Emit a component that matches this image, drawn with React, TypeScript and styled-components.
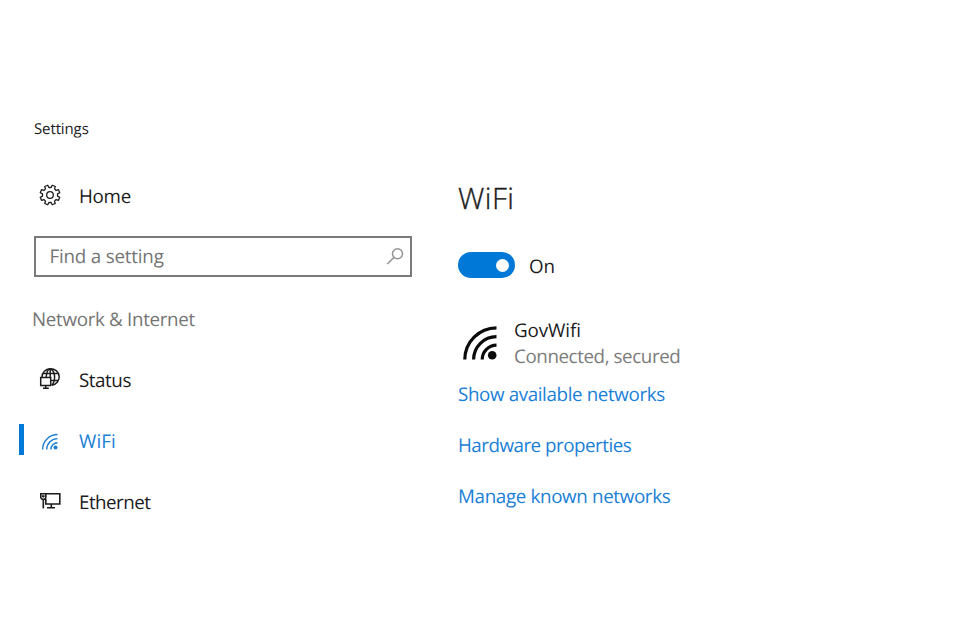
import React from 'react';
import styled, { createGlobalStyle } from 'styled-components';

const GlobalStyle = createGlobalStyle`
  *, *::before, *::after { box-sizing: border-box; }
  body {
    margin: 0;
    background: #fff;
    color: #1c1c1c;
    font-family: 'Open Sans', 'Noto Sans', sans-serif;
    font-size: 18.8px;
    line-height: 26px;
    text-rendering: geometricPrecision;
  }
`;

const Window = styled.div`
  display: grid;
  grid-template-columns: 458px 1fr;
  height: 640px;
  overflow: hidden;
  background: #fff;
`;

const Sidebar = styled.aside`
  display: flex;
  flex-direction: column;
  padding: 119px 46px 0 19px;
`;

const Label = styled.span<{ $track?: number }>`
  white-space: nowrap;
  letter-spacing: ${p => p.$track ?? 0}px;
`;

const WindowTitle = styled.div`
  padding-left: 15px;
  font-size: 15px;
  line-height: 20px;
  letter-spacing: -0.12px;
`;

const NavItem = styled.a<{ $active?: boolean }>`
  display: grid;
  grid-template-columns: 5px 49px 1fr;
  column-gap: 3px;
  align-items: center;
  height: 31px;
  color: ${p => (p.$active ? '#1a80d6' : 'inherit')};
  text-decoration: none;

  &::before {
    content: '';
    height: 31px;
    background: ${p => (p.$active ? '#0078d7' : 'transparent')};
  }

  ${Label} {
    padding-top: 2px;
  }
`;

const HomeItem = styled(NavItem)`
  margin-top: 40px;
`;

const NavIcon = styled.svg`
  display: block;
  width: 24px;
  height: 24px;
  margin-left: 10.5px;
  overflow: visible;
`;

const NavList = styled.nav`
  display: flex;
  flex-direction: column;
  gap: 30px;
  margin-top: 31px;
`;

const SearchBox = styled.div`
  display: flex;
  align-items: center;
  justify-content: space-between;
  width: 378px;
  height: 40.5px;
  margin: 26px 0 0 15px;
  padding: 0 6px 0 13.5px;
  border: 2px solid #7a7a7a;
  color: #757575;
`;

const SearchIcon = styled.svg`
  display: block;
  width: 18px;
  height: 18px;
`;

const SectionTitle = styled.div`
  margin-top: 29.5px;
  padding-left: 13px;
  color: #757575;
`;

const Content = styled.main`
  display: flex;
  flex-direction: column;
  align-items: flex-start;
  padding-top: 178px;
`;

const Heading = styled.h1`
  margin: 0;
  font-size: 29.5px;
  font-weight: 300;
  line-height: 40px;
  -webkit-text-stroke: 0.35px currentColor;
`;

const ToggleRow = styled.div`
  display: flex;
  align-items: center;
  gap: 14.5px;
  height: 26px;
  margin-top: 34px;

  ${Label} {
    padding-top: 2px;
  }
`;

const Toggle = styled.div`
  display: flex;
  align-items: center;
  justify-content: flex-end;
  width: 56.5px;
  height: 26px;
  padding-right: 6px;
  border-radius: 13px;
  background: #0078d7;
`;

const Knob = styled.div`
  width: 13px;
  height: 13px;
  border-radius: 50%;
  background: #fff;
`;

const Network = styled.div`
  display: flex;
  gap: 17px;
  margin-top: 38px;
  padding-left: 5px;
`;

const SignalIcon = styled.svg`
  display: block;
  width: 34px;
  height: 34px;
  margin-top: 10px;
  color: #0a0a0a;
`;

const NetworkText = styled.div`
  display: flex;
  flex-direction: column;
  padding-top: 1px;
`;

const NetworkState = styled(Label)`
  color: #7c7c7c;
`;

const Links = styled.div`
  display: flex;
  flex-direction: column;
  gap: 25px;
  margin-top: 12px;
`;

const Link = styled.a<{ $track: number }>`
  color: #1a80d6;
  letter-spacing: ${p => p.$track}px;
  text-decoration: none;
  white-space: nowrap;
`;

const gearPath = (() => {
  const points: string[] = [];
  for (let i = 0; i < 8; i++) {
    const mid = 22.5 + i * 45;
    const corners: [number, number][] = [[-14, 7.6], [-9.5, 10], [9.5, 10], [14, 7.6]];
    corners.forEach(([offset, r]) => {
      const a = ((mid + offset) * Math.PI) / 180;
      points.push(`${(12 + r * Math.cos(a)).toFixed(2)} ${(12 + r * Math.sin(a)).toFixed(2)}`);
    });
  }
  return `M${points.join('L')}Z`;
})();

const GearIcon = () => (
  <NavIcon viewBox="0 0 24 24" fill="none" stroke="currentColor" strokeWidth="1.3" strokeLinejoin="round">
    <path d={gearPath} />
    <circle cx="12" cy="12" r="3.3" />
  </NavIcon>
);

const GlobeIcon = () => (
  <NavIcon viewBox="0 0 24 24" fill="none" stroke="currentColor" strokeWidth="1.5">
    <path d="M4 10A8.6 8.3 0 1 1 14 18.2" />
    <path d="M8.2 10C8.6 4.8 10.4 2 12.2 2S16.6 5 16.6 10S15.2 17 13.6 18.2" />
    <path d="M12.2 2V10M5 6.5H19.6M13 13.5H20" />
    <path d="M2.7 10.4H12.7V18.6H2.7ZM7.7 18.6V21.2M5 21.2H10.8" />
  </NavIcon>
);

const EthernetIcon = () => (
  <NavIcon viewBox="0 0 24 24" fill="none" stroke="currentColor" strokeWidth="1.6">
    <path d="M2.8 4.8H7.8V8.8L6.6 10.2H4L2.8 8.8Z M4 7.1H6.6M5.3 7.1V8.5" />
    <path d="M5.3 10.2V19.4" />
    <path d="M7.8 4.8H21.8V15H7.8V9.8M13.3 15V18.8M9 18.8H17" />
  </NavIcon>
);

const Waves = ({ weight = 3.2 }: { weight?: number }) => (
  <>
    <g fill="none" stroke="currentColor" strokeWidth={weight}>
      <path d="M1.8 33.5A31.8 31.8 0 0 1 33.5 1.8" />
      <path d="M10.6 33.5A23 23 0 0 1 33.5 10.6" />
      <path d="M19.2 33.5A14.4 14.4 0 0 1 33.5 19.2" />
    </g>
    <circle cx="29.2" cy="29.3" r="4.3" fill="currentColor" />
  </>
);

const WifiIcon = () => (
  <NavIcon viewBox="-8 -12 51 51">
    <Waves weight={3} />
  </NavIcon>
);

export default function App() {
  return (
    <>
      <GlobalStyle />
      <Window>
        <Sidebar>
          <WindowTitle>Settings</WindowTitle>
          <HomeItem>
            <GearIcon />
            <Label $track={-0.3}>Home</Label>
          </HomeItem>
          <SearchBox>
            <Label $track={-0.2}>Find a setting</Label>
            <SearchIcon viewBox="0 0 18 18" fill="none" stroke="#959595" strokeWidth="1.5">
              <circle cx="11.5" cy="6.8" r="5" />
              <path d="M8 10.4L1.3 17" />
            </SearchIcon>
          </SearchBox>
          <SectionTitle>
            <Label $track={-0.32}>Network &amp; Internet</Label>
          </SectionTitle>
          <NavList>
            <NavItem>
              <GlobeIcon />
              <Label $track={-0.45}>Status</Label>
            </NavItem>
            <NavItem $active>
              <WifiIcon />
              <Label $track={0.1}>WiFi</Label>
            </NavItem>
            <NavItem>
              <EthernetIcon />
              <Label $track={-0.52}>Ethernet</Label>
            </NavItem>
          </NavList>
        </Sidebar>
        <Content>
          <Heading>
            <Label $track={0.5}>WiFi</Label>
          </Heading>
          <ToggleRow>
            <Toggle>
              <Knob />
            </Toggle>
            <Label>On</Label>
          </ToggleRow>
          <Network>
            <SignalIcon viewBox="0 0 34 34">
              <Waves />
            </SignalIcon>
            <NetworkText>
              <Label $track={-0.1}>GovWifi</Label>
              <NetworkState $track={-0.42}>Connected, secured</NetworkState>
            </NetworkText>
          </Network>
          <Links>
            <Link $track={-0.38}>Show available networks</Link>
            <Link $track={-0.5}>Hardware properties</Link>
            <Link $track={-0.35}>Manage known networks</Link>
          </Links>
        </Content>
      </Window>
    </>
  );
}
